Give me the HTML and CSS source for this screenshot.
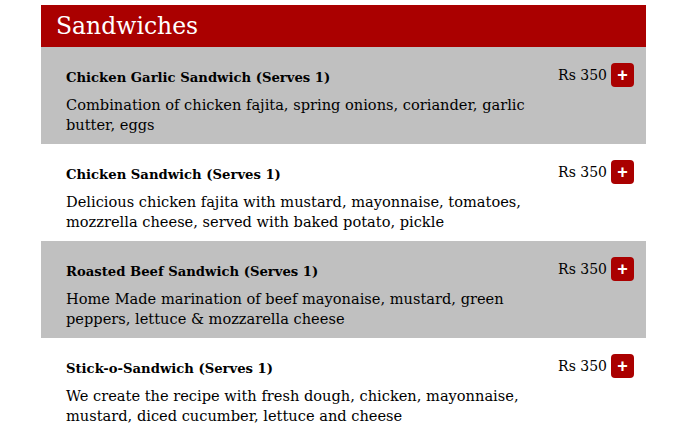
FILE: index.html
```html
<!DOCTYPE html>
<html>
<head>
<meta charset="utf-8">
<link rel="stylesheet" href="styles.css">
</head>
<body>
<section class="menu">
  <h2 class="menu-title">Sandwiches</h2>
  <div class="item alt">
    <div class="info">
      <h3 class="name">Chicken Garlic Sandwich (Serves 1)</h3>
      <p class="desc">Combination of chicken fajita, spring onions, coriander, garlic butter, eggs</p>
    </div>
    <div class="order"><span class="price">Rs 350</span><button class="add">+</button></div>
  </div>
  <div class="item">
    <div class="info">
      <h3 class="name">Chicken Sandwich (Serves 1)</h3>
      <p class="desc">Delicious chicken fajita with mustard, mayonnaise, tomatoes, mozzrella cheese, served with baked potato, pickle</p>
    </div>
    <div class="order"><span class="price">Rs 350</span><button class="add">+</button></div>
  </div>
  <div class="item alt">
    <div class="info">
      <h3 class="name">Roasted Beef Sandwich (Serves 1)</h3>
      <p class="desc">Home Made marination of beef mayonaise, mustard, green peppers, lettuce &amp; mozzarella cheese</p>
    </div>
    <div class="order"><span class="price">Rs 350</span><button class="add">+</button></div>
  </div>
  <div class="item">
    <div class="info">
      <h3 class="name">Stick-o-Sandwich (Serves 1)</h3>
      <p class="desc">We create the recipe with fresh dough, chicken, mayonnaise, mustard, diced cucumber, lettuce and cheese</p>
    </div>
    <div class="order"><span class="price">Rs 350</span><button class="add">+</button></div>
  </div>
</section>
</body>
</html>
```
FILE: styles.css
```css
* { box-sizing: border-box; }
body {
  margin: 0;
  padding: 5px 0 0 41px;
  background: #fff;
  font-family: "DejaVu Serif", serif;
  color: #000;
}
.menu { width: 605px; }
.menu-title {
  margin: 0;
  height: 42px;
  background: #aa0000;
  color: #fff;
  font-weight: normal;
  font-size: 23.5px;
  line-height: 42px;
  padding-left: 15px;
}
.item {
  height: 97px;
  display: flex;
  justify-content: space-between;
  padding: 21px 12px 0 25px;
}
.item.alt { background: #c0c0c0; }
.info { width: 462px; }
.name {
  margin: 0;
  font-size: 13.2px;
  line-height: 20px;
  font-weight: bold;
}
.desc {
  margin: 7px 0 0;
  font-size: 14.6px;
  line-height: 20px;
}
.order {
  display: flex;
  align-items: center;
  gap: 4px;
  height: 24px;
  margin-top: -5px;
}
.price { font-size: 14px; }
.add {
  width: 23px;
  height: 24px;
  border: 0;
  border-radius: 4px;
  background: #aa0000;
  color: #fff;
  font-family: "Liberation Sans", sans-serif;
  font-size: 18px;
  font-weight: bold;
  line-height: 24px;
  padding: 0;
}
```
